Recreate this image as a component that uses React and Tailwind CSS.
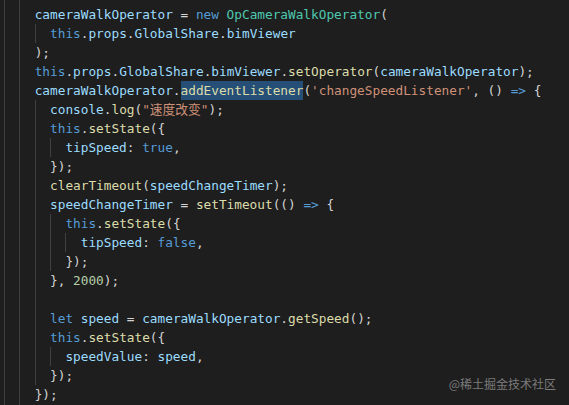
import React from 'react';

// token colour classes (VS Code Dark+)
const tone = {
  v: 'text-[#9cdcfe]',
  k: 'text-[#569cd6]',
  c: 'text-[#4ec9b0]',
  f: 'text-[#dcdcaa]',
  s: 'text-[#ce9178]',
  n: 'text-[#b5cea8]',
  p: 'text-[#d4d4d4]',
};

const lines = [
  [2, [['v', 'cameraWalkOperator'], ['p', ' = '], ['k', 'new'], ['p', ' '], ['c', 'OpCameraWalkOperator'], ['p', '(']]],
  [3, [['k', 'this'], ['p', '.'], ['v', 'props'], ['p', '.'], ['v', 'GlobalShare'], ['p', '.'], ['v', 'bimViewer']]],
  [2, [['p', ');']]],
  [2, [['k', 'this'], ['p', '.'], ['v', 'props'], ['p', '.'], ['v', 'GlobalShare'], ['p', '.'], ['v', 'bimViewer'], ['p', '.'], ['f', 'setOperator'], ['p', '('], ['v', 'cameraWalkOperator'], ['p', ');']]],
  [2, [['v', 'cameraWalkOperator'], ['p', '.'], ['f', 'addEventListener', true], ['p', '('], ['s', "'changeSpeedListener'"], ['p', ', () '], ['k', '=>'], ['p', ' {']]],
  [3, [['v', 'console'], ['p', '.'], ['f', 'log'], ['p', '('], ['s', '"速度改变"'], ['p', ');']]],
  [3, [['k', 'this'], ['p', '.'], ['f', 'setState'], ['p', '({']]],
  [4, [['v', 'tipSpeed'], ['p', ': '], ['k', 'true'], ['p', ',']]],
  [3, [['p', '});']]],
  [3, [['f', 'clearTimeout'], ['p', '('], ['v', 'speedChangeTimer'], ['p', ');']]],
  [3, [['v', 'speedChangeTimer'], ['p', ' = '], ['f', 'setTimeout'], ['p', '(() '], ['k', '=>'], ['p', ' {']]],
  [4, [['k', 'this'], ['p', '.'], ['f', 'setState'], ['p', '({']]],
  [5, [['v', 'tipSpeed'], ['p', ': '], ['k', 'false'], ['p', ',']]],
  [4, [['p', '});']]],
  [3, [['p', '}, '], ['n', '2000'], ['p', ');']]],
  [3, []],
  [3, [['k', 'let'], ['p', ' '], ['v', 'speed'], ['p', ' = '], ['v', 'cameraWalkOperator'], ['p', '.'], ['f', 'getSpeed'], ['p', '();']]],
  [3, [['k', 'this'], ['p', '.'], ['f', 'setState'], ['p', '({']]],
  [4, [['v', 'speedValue'], ['p', ': '], ['v', 'speed'], ['p', ',']]],
  [3, [['p', '});']]],
  [2, [['p', '});']]],
];

const Guides = ({ count }) =>
  Array.from({ length: count }).map((_, i) => (
    <span key={i} className='inline-block w-[2ch] h-full shrink-0 border-l border-[#404040]' />
  ));

const Line = ({ indent, tokens }) => (
  <div className='flex h-[19px] leading-[19px] whitespace-pre'>
    <Guides count={indent} />
    {tokens.map(([t, text, sel], i) => (
      <span key={i} className={`${tone[t]} ${sel ? 'bg-[#264f78]' : ''}`}>
        {text}
      </span>
    ))}
  </div>
);

export default function App() {
  return (
    <div className='relative w-[569px] h-[405px] overflow-hidden bg-[#1e1e1e] pl-[4px] flex flex-col font-["DejaVu_Sans_Mono","Noto_Sans_CJK_SC",monospace] text-[12.75px]'>
      {/* partial row above */}
      <div className='flex h-[5px] shrink-0'>
        <Guides count={2} />
      </div>
      {lines.map(([indent, tokens], i) => (
        <Line key={i} indent={indent} tokens={tokens} />
      ))}
      <div className='flex flex-1'>
        <Guides count={2} />
      </div>

      {/* watermark */}
      <div className='absolute right-[13px] bottom-[15px] text-[12px] leading-none text-[#7b7b7b] font-["Noto_Sans_CJK_SC",sans-serif]'>
        @稀土掘金技术社区
      </div>
    </div>
  );
}
